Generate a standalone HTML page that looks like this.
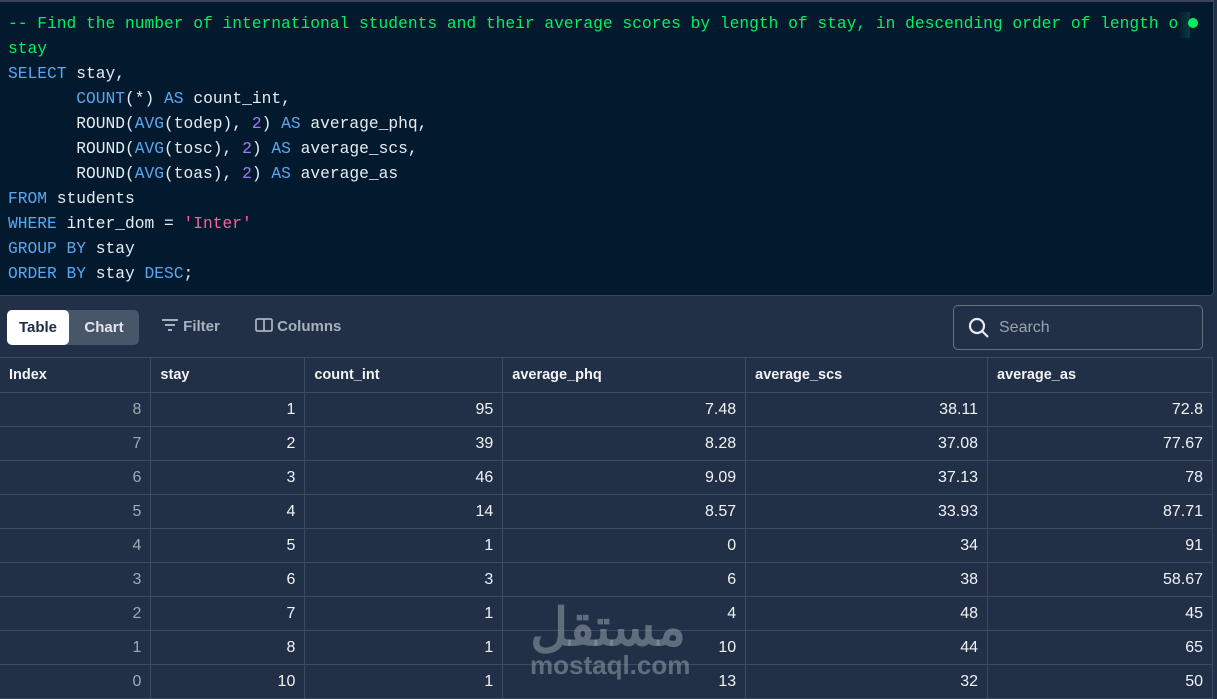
<!DOCTYPE html>
<html><head><meta charset="utf-8"><style>
*{margin:0;padding:0;box-sizing:border-box}
body{width:1217px;height:696px;overflow:hidden;background:#213047;font-family:"Liberation Sans",sans-serif;position:relative}
.code{position:absolute;left:0;top:0;width:1214px;height:296px;background:#031a2e;border-top:2px solid #3a4658;border-right:1px solid #3a4658;border-bottom:1px solid #3a4658;border-bottom-right-radius:4px}
pre{position:absolute;left:8px;top:9px;font-family:"Liberation Mono",monospace;font-size:16.25px;line-height:25px;color:#e6ecf2;white-space:pre}
.c{color:#03ef62}.k{color:#5aa7f0}.n{color:#9d7df5}.s{color:#f0649a}
.dot{position:absolute;left:1188px;top:16px;width:10px;height:10px;border-radius:50%;background:#03ef62}
.fade{position:absolute;left:1178px;top:10px;width:12px;height:26px;background:linear-gradient(90deg,rgba(3,26,46,0),#0a3a3a)}
.tabs{position:absolute;left:7px;top:310px;width:132px;height:35px;background:#48566a;border-radius:5px}
.tab1{position:absolute;left:0;top:0;width:62px;height:35px;background:#fff;border-radius:5px;color:#1f2d40;font-weight:bold;font-size:15px;line-height:35px;text-align:center}
.tab2{position:absolute;left:62px;top:0;width:70px;height:35px;color:#e3e7ec;font-weight:bold;font-size:15px;line-height:35px;text-align:center}
.tool{position:absolute;top:318px;color:#a8b1bd;font-weight:bold;font-size:15px}
.search{position:absolute;left:953px;top:305px;width:250px;height:45px;border:1px solid #66727f;border-radius:5px}
.search span{position:absolute;left:45px;top:13px;color:#9aa3ae;font-size:16px}
table{position:absolute;left:0;top:357px;border-collapse:collapse;width:1213px}
td,th{border:1px solid #3d4b60;height:34px;font-size:16px;color:#f1f3f5;padding:0 9px}
th{text-align:left;font-size:14.5px;font-weight:bold;height:35px;border-top:1px solid #3d4b60}
td{text-align:right}
td:first-child{color:#a0a8b3}
tr>*:first-child{border-left:none}
.wm{position:absolute;left:530px;top:600px;width:156px;color:rgba(150,160,170,.55);text-align:center}
</style></head><body>
<div class="code">
<pre><span class="c">-- Find the number of international students and their average scores by length of stay, in descending order of length o
stay</span>
<span class="k">SELECT</span> stay,
       <span class="k">COUNT</span>(*) <span class="k">AS</span> count_int,
       ROUND(<span class="k">AVG</span>(todep), <span class="n">2</span>) <span class="k">AS</span> average_phq,
       ROUND(<span class="k">AVG</span>(tosc), <span class="n">2</span>) <span class="k">AS</span> average_scs,
       ROUND(<span class="k">AVG</span>(toas), <span class="n">2</span>) <span class="k">AS</span> average_as
<span class="k">FROM</span> students
<span class="k">WHERE</span> inter_dom = <span class="s">'Inter'</span>
<span class="k">GROUP BY</span> stay
<span class="k">ORDER BY</span> stay <span class="k">DESC</span>;</pre>
<div class="fade"></div><div class="dot"></div>
</div>
<div class="tabs"><div class="tab1">Table</div><div class="tab2">Chart</div></div>
<div class="tool" style="left:161px"><svg width="18" height="14" viewBox="0 0 18 14" style="vertical-align:-1px"><path d="M1 2h16M4 7h10M7 12h4" stroke="#a8b1bd" stroke-width="2" fill="none"/></svg> Filter</div>
<div class="tool" style="left:255px"><svg width="18" height="14" viewBox="0 0 18 14" style="vertical-align:-1px"><rect x="1" y="1" width="16" height="12" rx="1.5" stroke="#a8b1bd" stroke-width="1.8" fill="none"/><path d="M9 1v12" stroke="#a8b1bd" stroke-width="1.8"/></svg> Columns</div>
<div class="search"><svg width="22" height="22" viewBox="0 0 22 22" style="position:absolute;left:14px;top:11px"><circle cx="9" cy="9" r="7" stroke="#e8ecf0" stroke-width="2.2" fill="none"/><path d="M14 14l6 6" stroke="#e8ecf0" stroke-width="2.2"/></svg><span>Search</span></div>
<table>
<colgroup><col style="width:151px"><col style="width:154px"><col style="width:198px"><col style="width:243px"><col style="width:242px"><col style="width:225px"></colgroup>
<tr><th>Index</th><th>stay</th><th>count_int</th><th>average_phq</th><th>average_scs</th><th>average_as</th></tr>
<tr><td>8</td><td>1</td><td>95</td><td>7.48</td><td>38.11</td><td>72.8</td></tr>
<tr><td>7</td><td>2</td><td>39</td><td>8.28</td><td>37.08</td><td>77.67</td></tr>
<tr><td>6</td><td>3</td><td>46</td><td>9.09</td><td>37.13</td><td>78</td></tr>
<tr><td>5</td><td>4</td><td>14</td><td>8.57</td><td>33.93</td><td>87.71</td></tr>
<tr><td>4</td><td>5</td><td>1</td><td>0</td><td>34</td><td>91</td></tr>
<tr><td>3</td><td>6</td><td>3</td><td>6</td><td>38</td><td>58.67</td></tr>
<tr><td>2</td><td>7</td><td>1</td><td>4</td><td>48</td><td>45</td></tr>
<tr><td>1</td><td>8</td><td>1</td><td>10</td><td>44</td><td>65</td></tr>
<tr><td>0</td><td>10</td><td>1</td><td>13</td><td>32</td><td>50</td></tr>
</table>
<div class="wm"><div style="font-family:'Liberation Sans','Noto Sans CJK SC',sans-serif;font-size:52px;font-weight:bold;line-height:56px">مستقل</div><div style="font-size:26px;font-weight:bold;line-height:26px;margin-top:-4px">mostaql.com</div></div>
</body></html>
